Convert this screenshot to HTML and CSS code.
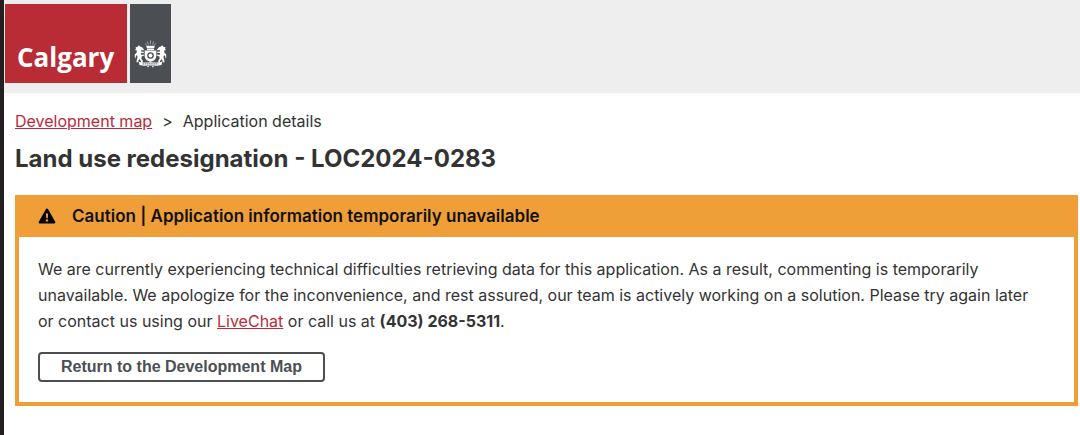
FILE: index.html
```html
<!DOCTYPE html>
<html lang="en">
<head>
    <meta charset="UTF-8">
    <meta name="viewport" content="width=device-width, initial-scale=1.0">
    <title>Land use redesignation - LOC2024-0283</title>
    <link rel="stylesheet" href="styles.css">
</head>
<body>
    <header class="header">
        <div class="logo">
            <span class="logo-name">Calgary</span>
            <span class="logo-crest">
                <svg class="crest" viewBox="0 0 34 28" fill="#fff" aria-hidden="true">
                    <!-- rays and crown -->
                    <path d="M17 0v4M13.8 1l1 3.2M20.2 1l-1 3.2M11.5 3l1.6 2M22.5 3l-1.6 2" fill="none" stroke="#fff" stroke-width=".5"/>
                    <path d="M12.5 5.5h9l-.7 2.2h-7.6zM13.4 8.4h7.2v1.4h-7.2z"/>
                    <!-- shield -->
                    <path d="M11 10.5h12V16c0 3.2-2.700 5-6 6-3.300-1-6-2.800-6-6z"/>
                    <circle cx="17" cy="15.5" r="3.4" fill="#4b4f54"/>
                    <circle cx="17" cy="15.5" r="2"/>
                    <!-- horse on each side -->
                    <path id="horse" d="M5 5l1.300 1.200 2 .8 2 2.400-.8 1.100-1.800-.8-.5 1.800 2.800.3v1.200L7.200 13l.4 2 2.700-.4.3 1-2.800 1-.2 2.200 1.600 2.400-.6 1.500H6.900l.4-1.300-1.800-2.200-1 1.700.2 1.700H2.600l.3-2.800.8-2.600-.7-2.200-1.200 1.200-.2 2.600L.7 17l.2-2.700 2-1.800L2.600 9.800 1 10.200l1.200-2L1.400 7l2-.2z"/>
                    <use href="#horse" transform="translate(34 0) scale(-1 1)"/>
                    <!-- ribbon -->
                    <path d="M5 22c3.500 1.200 8 .4 12 .4s8.500.8 12-.4l-.6 3.400c-3.400 1-7.400.5-11.400.5s-8 .5-11.400-.5z"/>
                    <path d="M9 24.2h16" stroke="#4b4f54" stroke-width="1" stroke-dasharray="1.5 .7"/>
                    <path d="M13.5 27l1-1 1 1-1 1zM18.5 27l1-1 1 1-1 1z"/>
                </svg>
            </span>
        </div>
    </header>

    <main class="content">
        <nav class="breadcrumb">
            <a href="#">Development map</a>
            <span>&gt;</span>
            <span>Application details</span>
        </nav>
        <h1>Land use redesignation - LOC2024-0283</h1>

        <section class="alert">
            <h2 class="alert-title">
                <svg class="warning" viewBox="0 0 18 16" aria-hidden="true">
                    <path d="M9 .5c.5 0 .9.3 1.100.7l7.100 12.600c.5.9 0 1.700-1 1.700H1.800c-1 0-1.500-.8-1-1.700L7.900 1.200C8.100.8 8.500.5 9 .5z"/>
                    <path d="M7.900 5.500h2.200l-.3 4.800H8.200z" fill="#f09f38"/>
                    <circle cx="9" cy="12.4" r="1.2" fill="#f09f38"/>
                </svg>
                Caution | Application information temporarily unavailable
            </h2>
            <div class="alert-body">
                <p>We are currently experiencing technical difficulties retrieving data for this application. As a result, commenting is temporarily unavailable. We apologize for the inconvenience, and rest assured, our team is actively working on a solution. Please try again later or contact us using our <a href="#">LiveChat</a> or call us at <strong>(403) 268-5311</strong>.</p>
                <button type="button" class="btn">Return to the Development Map</button>
            </div>
        </section>
    </main>
</body>
</html>
```

FILE: styles.css
```css
* {
    box-sizing: border-box;
}
body {
    margin: 0;
    min-height: 100vh;
    border-left: 4px solid #231f20;
    background: #fff;
    color: #333;
    font-family: Inter, "Liberation Sans", sans-serif;
    font-size: 16px;
    line-height: 26px;
}
a {
    color: #b92b3a;
    text-decoration: underline;
}

/* header */
.header {
    padding: 4px 1px 10px;
    background: #eee;
}
.logo {
    display: flex;
    gap: 3px;
    height: 79px;
}
.logo-name {
    width: 122px;
    padding: 33px 0 0 12px;
    background: #b92b35;
    color: #fff;
    font-family: "Open Sans", "Noto Sans", sans-serif;
    font-size: 26px;
    font-weight: 700;
    line-height: 40px;
}
.logo-crest {
    width: 41px;
    padding: 36px 4px 0;
    background: #4b4f54;
}
.crest {
    display: block;
    width: 33px;
    height: 28px;
}

/* content */
.content {
    padding: 15px 2px 29px 11px;
}
.breadcrumb {
    display: flex;
    gap: 10px;
}
h1 {
    margin: 9px 0 20px;
    font-size: 24px;
    font-weight: 700;
    line-height: 32px;
}

/* alert */
.alert {
    border: 4px solid #f09f38;
}
.alert-title {
    display: flex;
    align-items: center;
    gap: 16px;
    margin: 0;
    padding: 4px 19px 8px;
    background: #f09f38;
    color: #111;
    font-size: 17px;
    font-weight: 600;
    line-height: 26px;
}
.warning {
    width: 18px;
    height: 16px;
}
.alert-body {
    padding: 19px 19px 20px;
}
.alert-body p {
    margin: 0 0 18px;
    padding-right: 12px;
}
.btn {
    display: block;
    height: 30px;
    padding: 0 21px;
    border: 2px solid #4b4f54;
    border-radius: 4px;
    background: #fff;
    color: #4b4f54;
    font-family: "Liberation Sans", Arial, sans-serif;
    font-size: 16px;
    font-weight: 700;
}
```
